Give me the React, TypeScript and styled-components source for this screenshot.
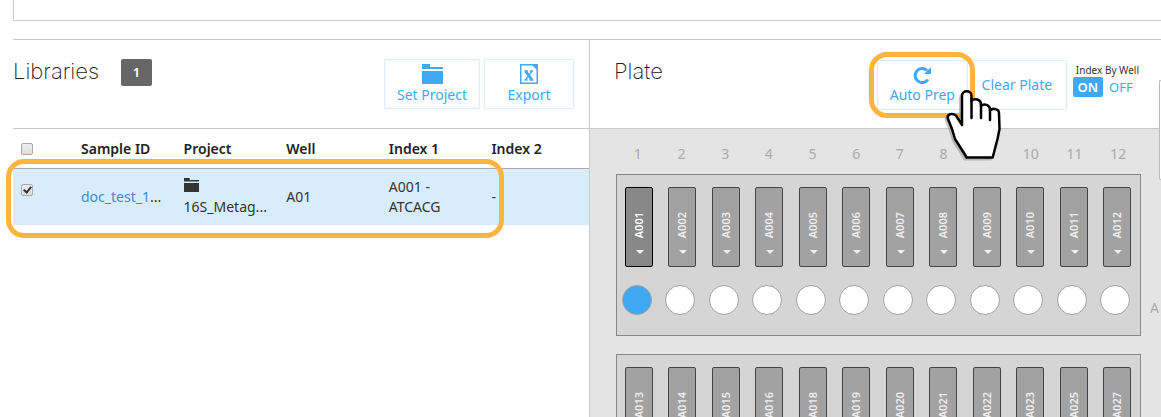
import React from "react";
import styled, { createGlobalStyle } from "styled-components";

const Global = createGlobalStyle`
  *, *::before, *::after { box-sizing: border-box; }
  html { height: 100%; }
  body {
    margin: 0;
    background: #fff;
    color: #333;
    font: 14px/20px "Noto Sans", "Open Sans", sans-serif;
  }
  button { font: inherit; cursor: pointer; }
`;

const Page = styled.div`
  position: relative;
  display: flex;
  flex-direction: column;
  height: 100vh;
  overflow: hidden;
  padding-left: 13px;
`;

const TopPanel = styled.div`
  flex: none;
  height: 21px;
  border: 1px solid #c8c8c8;
  border-top: 0;
  border-right: 0;
  border-radius: 0 0 0 2px;
`;

const Workspace = styled.main`
  display: grid;
  grid-template-columns: minmax(0, 577fr) minmax(0, 571fr);
  margin-top: 18px;
  border-top: 1px solid #c8c8c8;
  flex: 1;
`;

const LibrariesPane = styled.section`
  border-right: 1px solid #c8c8c8;
`;

const PlatePane = styled.section`
  display: flex;
  flex-direction: column;
`;

const PaneHeader = styled.header<{ $inset?: boolean }>`
  display: flex;
  align-items: flex-start;
  height: 89px;
  padding: ${(p) => (p.$inset ? "19px 22px 0 24px" : "19px 15px 0 0")};
  border-bottom: 1px solid #c8c8c8;
`;

const Title = styled.h1`
  margin: 0;
  font: 200 22px/24px Inter, "Liberation Sans", sans-serif;
  color: #222;
`;

const Count = styled.span`
  width: 31px;
  margin-left: 22px;
  border-radius: 2px;
  background: #666;
  color: #fff;
  font-size: 13px;
  font-weight: 600;
  line-height: 27px;
  text-align: center;
`;

const Actions = styled.div`
  display: flex;
  gap: 4px;
  margin-left: auto;
`;

const ActionButton = styled.button<{ $width: number }>`
  display: flex;
  flex-direction: column;
  align-items: center;
  justify-content: center;
  gap: 2px;
  width: ${(p) => p.$width}px;
  height: 50px;
  padding: 0;
  border: 1px solid #d8edfc;
  border-radius: 2px;
  background: #fff;
  color: #3fa9f5;
  line-height: 18px;
  white-space: nowrap;
  svg { display: block; }
`;

const PlateActions = styled.div`
  display: flex;
  margin-left: auto;
  padding-top: 1px;
`;

const Toggle = styled.div`
  margin-left: 6px;
  padding-top: 3px;
`;

const ToggleTitle = styled.div`
  padding-left: 3px;
  color: #333;
  font-size: 10px;
  line-height: 14px;
  white-space: nowrap;
`;

const ToggleButtons = styled.div`
  display: flex;
`;

const ToggleButton = styled.button<{ $on?: boolean }>`
  width: ${(p) => (p.$on ? 30 : 36)}px;
  height: 20px;
  padding: 0;
  border: 0;
  border-radius: 2px;
  background: ${(p) => (p.$on ? "#3fa9f5" : "transparent")};
  color: ${(p) => (p.$on ? "#fff" : "#3fa9f5")};
  font-size: 13px;
  font-weight: ${(p) => (p.$on ? 600 : 400)};
  line-height: 20px;
`;

const Table = styled.table`
  width: 100%;
  table-layout: fixed;
  border-collapse: separate;
  border-spacing: 0;
  text-align: left;
`;

const CheckCol = styled.col`
  width: 63px;
`;

const HeadCell = styled.th`
  height: 40px;
  padding: 0 0 0 5px;
  border-bottom: 1px solid #aaa;
  color: #222;
  font-weight: 600;
`;

const Cell = styled.td`
  height: 56px;
  padding: 0 10px 0 5px;
  background: #d8edfc;
  white-space: nowrap;
`;

const IndexCell = styled(Cell)`
  white-space: normal;
`;

const CheckCell = styled(Cell)`
  padding: 15px 0 0 8px;
  vertical-align: top;
`;

const CheckHead = styled(HeadCell)`
  padding-left: 8px;
`;

const Check = styled.input`
  appearance: none;
  display: block;
  width: 12px;
  height: 12px;
  margin: 0;
  border: 1px solid #aaa;
  border-radius: 2px;
  background: linear-gradient(#eee, #ddd);
  &:checked::after {
    content: "";
    display: block;
    width: 5px;
    height: 8px;
    margin: 0 0 0 3px;
    border: solid #333;
    border-width: 0 2px 2px 0;
    transform: rotate(40deg);
  }
`;

const SampleLink = styled.a`
  color: #428bca;
  text-decoration: none;
`;

const Board = styled.div`
  flex: 1;
  padding: 15px 20px 0 26px;
  background: #e4e4e4;
`;

const Columns = styled.div`
  display: grid;
  grid-template-columns: repeat(12, minmax(0, 1fr));
`;

const ColumnNumbers = styled(Columns)`
  padding-right: 1px;
  margin-bottom: 10px;
  color: #aaa;
  text-align: center;
`;

const Strip = styled(Columns)`
  height: 162px;
  padding: 12px 1px 0 0;
  border: 1px solid #888;
  background: #d5d5d5;
`;

const StripRow = styled.div`
  position: relative;
  margin-bottom: 18px;
`;

const Slot = styled.div`
  display: flex;
  flex-direction: column;
  align-items: center;
  gap: 18px;
`;

const IndexButton = styled.button<{ $active?: boolean }>`
  display: flex;
  flex-direction: column;
  align-items: center;
  justify-content: flex-end;
  gap: 12px;
  width: 28px;
  height: 80px;
  padding: 0 0 12px;
  border: 1px solid ${(p) => (p.$active ? "#000" : "#444")};
  border-radius: 2px;
  background: ${(p) => (p.$active ? "#888" : "#a2a2a2")};
  color: ${(p) => (p.$active ? "#fff" : "#eee")};
  font-size: 11px;
  font-weight: 600;
`;

const IndexName = styled.span`
  writing-mode: vertical-rl;
  transform: rotate(180deg);
  line-height: 16px;
`;

const Caret = styled.span`
  margin-left: 2px;
  border: 4px solid transparent;
  border-top-color: currentColor;
  border-bottom: 0;
`;

const Well = styled.span<{ $filled?: boolean }>`
  width: 30px;
  height: 30px;
  margin-right: 4px;
  border: 1px solid #a2a2a2;
  border-radius: 50%;
  background: ${(p) => (p.$filled ? "#3fa9f5" : "#fff")};
`;

const RowLetter = styled.span`
  position: absolute;
  left: calc(100% + 9px);
  top: 124px;
  color: #aaa;
`;

const Highlight = styled.div`
  position: absolute;
  border: 5px solid #ffb340;
  border-radius: 18px;
  pointer-events: none;
`;

const RowHighlight = styled(Highlight)`
  left: 6px;
  top: 159px;
  width: 498px;
  height: 79px;
`;

const PrepHighlight = styled(Highlight)`
  left: -8px;
  top: -8px;
  width: 106px;
  height: 66px;
`;

const PrepAnchor = styled.div`
  position: relative;
  margin-right: -1px;
`;

const Hand = styled.svg`
  position: absolute;
  left: 67px;
  top: 29px;
  z-index: 2;
  pointer-events: none;
`;

const SideTab = styled.div`
  position: absolute;
  right: 0;
  top: 80px;
  width: 2px;
  height: 100px;
  border: 1px solid #bbb;
  border-right: 0;
  border-radius: 3px 0 0 3px;
  background: #fff;
`;

const Folder = ({ width }: { width: number }) => (
  <svg width={width} height={width === 21 ? 20 : 14} viewBox="0 0 21 20" preserveAspectRatio="none" fill="currentColor" aria-hidden="true">
    <path d="M0 0h8v3h13v2H0zM0 7h21v13H0z" />
  </svg>
);

const SheetIcon = () => (
  <svg width="18" height="20" viewBox="0 0 18 20" fill="none" stroke="currentColor" aria-hidden="true">
    <path d="M.75.75h16.5v18.5H.75z" strokeWidth="1.5" />
    <path d="M11 0h7v7z" fill="currentColor" stroke="none" />
    <path d="M5.5 7l6.500 9" strokeWidth="2.800" />
    <path d="M12 7l-6.500 9M4.500 7h3.500M10 7h3M4.500 16h3M9.500 16h4" strokeWidth="1.300" />
  </svg>
);

const RedoIcon = () => (
  <svg width="18" height="18" viewBox="0 0 18 18" fill="none" aria-hidden="true">
    <path d="M14 4.500A7 7 0 1 0 15 13.500" stroke="currentColor" strokeWidth="3" />
    <path d="M18 1v7h-7z" fill="currentColor" />
  </svg>
);

const handOutline =
  "M22.700 68.500L19.300 63 11 50 8 40 4 30C2.500 26 7 23 12 26.500L18 36V7C18 .8 27.500.8 27.500 7v5c3-3.500 9.500-1.500 9.500 3v2c3-3 9-1 9 3.500v1c3-3 9-1.500 9 2.500l.5 16L53.500 50l-4.800 18.500z";

const columns = ["Sample ID", "Project", "Well", "Index 1", "Index 2"];
const strips = [
  ["A001", "A002", "A003", "A004", "A005", "A006", "A007", "A008", "A009", "A010", "A011", "A012"],
  ["A013", "A014", "A015", "A016", "A018", "A019", "A020", "A021", "A022", "A023", "A025", "A027"],
];

export default function App() {
  return (
    <Page>
      <Global />
      <TopPanel />
      <Workspace>
        <LibrariesPane>
          <PaneHeader>
            <Title>Libraries</Title>
            <Count>1</Count>
            <Actions>
              <ActionButton $width={96}><Folder width={21} />Set Project</ActionButton>
              <ActionButton $width={90}><SheetIcon />Export</ActionButton>
            </Actions>
          </PaneHeader>
          <Table>
            <colgroup>
              <CheckCol />
              {columns.map((c) => <col key={c} />)}
            </colgroup>
            <thead>
              <tr>
                <CheckHead><Check type="checkbox" aria-label="Select all" /></CheckHead>
                {columns.map((c) => <HeadCell key={c}>{c}</HeadCell>)}
              </tr>
            </thead>
            <tbody>
              <tr>
                <CheckCell><Check type="checkbox" defaultChecked aria-label="Select sample" /></CheckCell>
                <Cell><SampleLink href="#sample">doc_test_1</SampleLink>...</Cell>
                <Cell><Folder width={15} /><br />16S_Metag...</Cell>
                <Cell>A01</Cell>
                <IndexCell>A001 - ATCACG</IndexCell>
                <Cell>-</Cell>
              </tr>
            </tbody>
          </Table>
        </LibrariesPane>
        <PlatePane>
          <PaneHeader $inset>
            <Title as="h2">Plate</Title>
            <PlateActions>
              <PrepAnchor>
                <ActionButton $width={91}><RedoIcon />Auto Prep</ActionButton>
                <PrepHighlight />
                <Hand width="58" height="72" viewBox="0 0 58 72" aria-hidden="true">
                  <path d={handOutline} transform="translate(-2 2)" fill="#888" stroke="#888" strokeWidth="2" opacity=".5" />
                  <path d={handOutline} fill="#fff" stroke="#000" strokeWidth="2.500" strokeLinejoin="round" />
                  <path d="M27.500 10v19M37 15v14M46 20v11" stroke="#000" strokeWidth="2.500" strokeLinecap="round" />
                </Hand>
              </PrepAnchor>
              <ActionButton $width={100}>Clear Plate</ActionButton>
              <Toggle role="group" aria-labelledby="index-by-well">
                <ToggleTitle id="index-by-well">Index By Well</ToggleTitle>
                <ToggleButtons>
                  <ToggleButton $on>ON</ToggleButton>
                  <ToggleButton>OFF</ToggleButton>
                </ToggleButtons>
              </Toggle>
            </PlateActions>
          </PaneHeader>
          <Board>
            <ColumnNumbers>
              {strips[0].map((s, i) => <span key={s}>{i + 1}</span>)}
            </ColumnNumbers>
            {strips.map((strip, r) => (
              <StripRow key={r}>
                <Strip>
                  {strip.map((name, i) => (
                    <Slot key={name}>
                      <IndexButton $active={r === 0 && i === 0}>
                        <IndexName>{name}</IndexName>
                        <Caret />
                      </IndexButton>
                      <Well $filled={r === 0 && i === 0} />
                    </Slot>
                  ))}
                </Strip>
                {r === 0 && <RowLetter>A</RowLetter>}
              </StripRow>
            ))}
          </Board>
        </PlatePane>
      </Workspace>
      <RowHighlight />
      <SideTab />
    </Page>
  );
}
